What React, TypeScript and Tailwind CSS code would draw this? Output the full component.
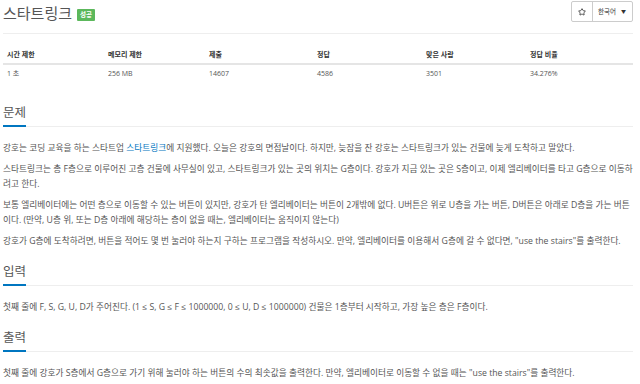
import { Star } from 'lucide-react';

const stats = [
  { label: '시간 제한', value: '1 초', w: 'w-[101px]' },
  { label: '메모리 제한', value: '256 MB', w: 'w-[101px]' },
  { label: '제출', value: '14607', w: 'w-[108px]' },
  { label: '정답', value: '4586', w: 'w-[109px]' },
  { label: '맞은 사람', value: '3501', w: 'w-[104px]' },
  { label: '정답 비율', value: '34.276%', w: 'w-[107px]' },
];

function Headline({ children }: { children: React.ReactNode }) {
  return (
    <div className="border-b border-[#eee]">
      <h2 className="inline-block -mb-px border-b-2 border-[#0076c0] pb-[4px] text-[12.5px] leading-[16px] font-normal text-[#555]">
        {children}
      </h2>
    </div>
  );
}

export default function App() {
  return (
    <div className="min-h-[384px] bg-white pl-[3px] pr-[7px] font-['Open_Sans','Noto_Sans_CJK_KR',sans-serif] text-[#555]">
      {/* 제목 + 버튼 */}
      <div className="flex h-[34px] items-start justify-between border-b border-[#eee]">
        <div className="flex items-center gap-[5px] pt-[3px]">
          <h1 className="text-[15px] leading-[20px] font-normal text-[#555]">스타트링크</h1>
          <span className="mt-[3px] rounded-[1px] bg-[#5cb85c] px-[3px] text-[6.5px] leading-[12px] font-bold text-white">
            성공
          </span>
        </div>
        <div className="mt-[1px] flex h-[21px] rounded-[2px] border border-[#ccc] text-[#333]">
          <button className="flex w-[21px] items-center justify-center border-r border-[#ccc]">
            <Star className="h-[8px] w-[8px]" strokeWidth={2.5} />
          </button>
          <button className="flex items-center gap-[5px] pl-[5px] pr-[6px] text-[6.5px]">
            한국어 <span className="text-[5px]">▼</span>
          </button>
        </div>
      </div>

      {/* 통계 표 */}
      <table className="mt-[13px] border-collapse text-[7px] leading-[10px]">
        <thead>
          <tr className="border-b-2 border-[#e5e5e5]">
            {stats.map((s) => (
              <th key={s.label} className={`${s.w} px-[4px] py-[3px] text-left font-bold text-[#333]`}>
                {s.label}
              </th>
            ))}
          </tr>
        </thead>
        <tbody>
          <tr>
            {stats.map((s) => (
              <td key={s.label} className="px-[4px] pt-[4px] pb-[4px] text-[#555]">
                {s.value}
              </td>
            ))}
          </tr>
        </tbody>
      </table>

      {/* 문제 */}
      <section className="mt-[16px]">
        <Headline>문제</Headline>
        <div className="mt-[14px] flex flex-col gap-[6px] text-[8.7px] leading-[15px]">
          <p>
            강호는 코딩 교육을 하는 스타트업 <a className="text-[#0076c0]">스타트링크</a>에 지원했다. 오늘은 강호의 면접날이다. 하지만, 늦잠을 잔 강호는 스타트링크가 있는 건물에 늦게 도착하고 말았다.
          </p>
          <p>
            스타트링크는 총 F층으로 이루어진 고층 건물에 사무실이 있고, 스타트링크가 있는 곳의 위치는 G층이다. 강호가 지금 있는 곳은 S층이고, 이제 엘리베이터를 타고 G층으로 이동하려고 한다.
          </p>
          <p>
            보통 엘리베이터에는 어떤 층으로 이동할 수 있는 버튼이 있지만, 강호가 탄 엘리베이터는 버튼이 2개밖에 없다. U버튼은 위로 U층을 가는 버튼, D버튼은 아래로 D층을 가는 버튼이다. (만약, U층 위, 또는 D층 아래에 해당하는 층이 없을 때는, 엘리베이터는 움직이지 않는다)
          </p>
          <p>
            강호가 G층에 도착하려면, 버튼을 적어도 몇 번 눌러야 하는지 구하는 프로그램을 작성하시오. 만약, 엘리베이터를 이용해서 G층에 갈 수 없다면, "use the stairs"를 출력한다.
          </p>
        </div>
      </section>

      {/* 입력 */}
      <section className="mt-[9px]">
        <Headline>입력</Headline>
        <div className="mt-[14px] text-[8.7px] leading-[15px]">
          <p>
            첫째 줄에 F, S, G, U, D가 주어진다. (1 ≤ S, G ≤ F ≤ 1000000, 0 ≤ U, D ≤ 1000000) 건물은 1층부터 시작하고, 가장 높은 층은 F층이다.
          </p>
        </div>
      </section>

      {/* 출력 */}
      <section className="mt-[9px]">
        <Headline>출력</Headline>
        <div className="mt-[14px] text-[8.7px] leading-[15px]">
          <p>
            첫째 줄에 강호가 S층에서 G층으로 가기 위해 눌러야 하는 버튼의 수의 최솟값을 출력한다. 만약, 엘리베이터로 이동할 수 없을 때는 "use the stairs"를 출력한다.
          </p>
        </div>
      </section>
    </div>
  );
}
